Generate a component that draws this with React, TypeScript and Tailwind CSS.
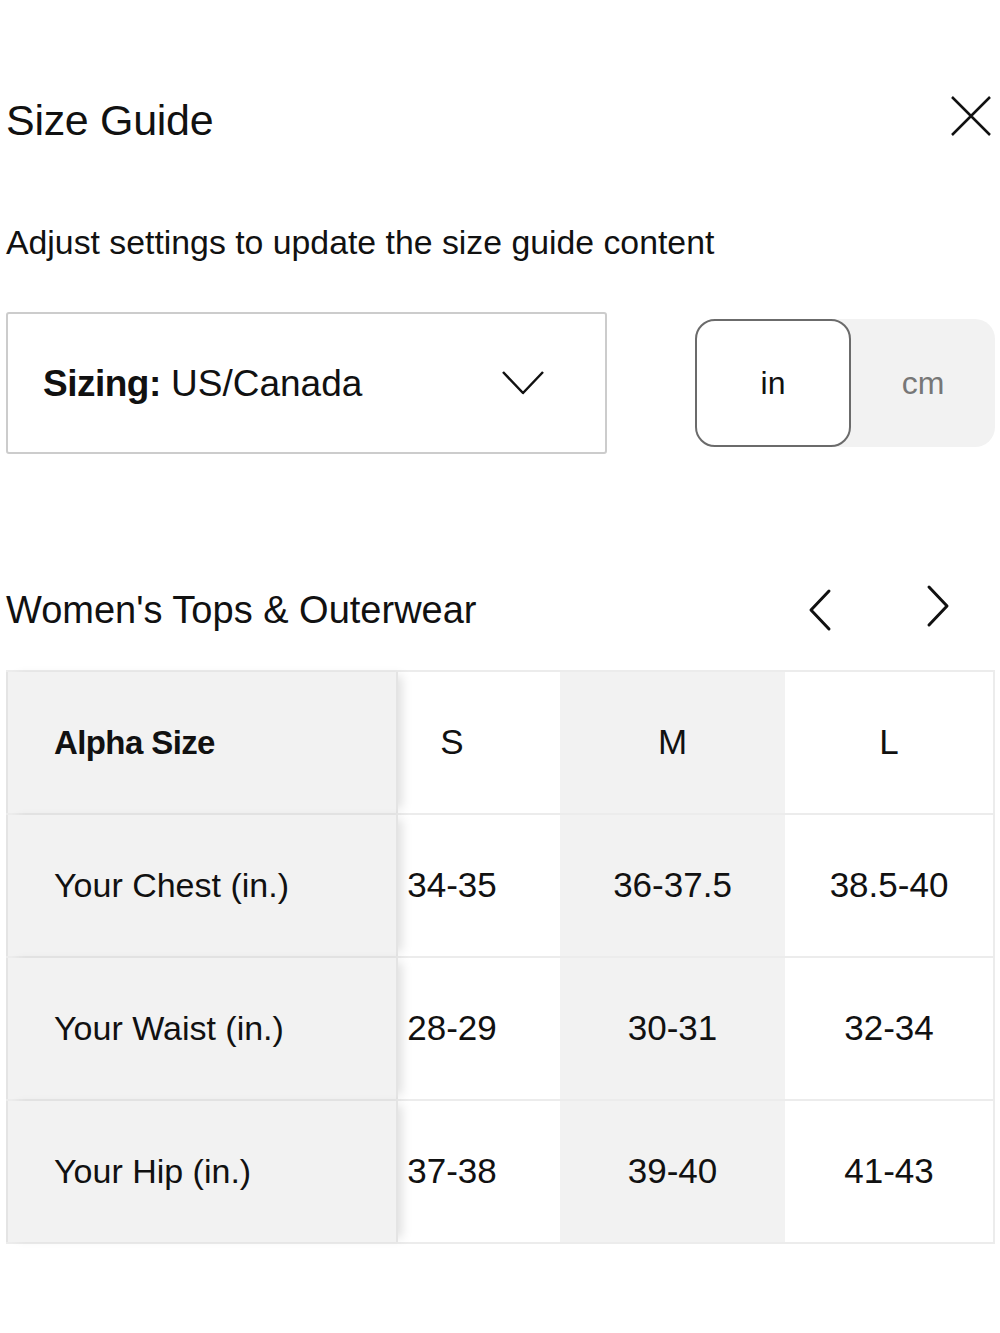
import { useState } from "react";

type Row = { label: string; head?: boolean; values: string[] };

const rows: Row[] = [
  { label: "Alpha Size", head: true, values: ["S", "M", "L"] },
  { label: "Your Chest (in.)", values: ["34-35", "36-37.5", "38.5-40"] },
  { label: "Your Waist (in.)", values: ["28-29", "30-31", "32-34"] },
  { label: "Your Hip (in.)", values: ["37-38", "39-40", "41-43"] },
];

function Chevron({ dir }: { dir: "left" | "right" }) {
  return (
    <svg width="28" height="44" viewBox="0 0 28 44" fill="none">
      <path
        d={dir === "left" ? "M22 3 L4 22 L22 41" : "M6 3 L24 22 L6 41"}
        stroke="#111"
        strokeWidth="3"
        strokeLinecap="round"
        strokeLinejoin="round"
      />
    </svg>
  );
}

export default function App() {
  const [unit, setUnit] = useState<"in" | "cm">("in");

  return (
    <main className="w-[1000px] min-h-[1333px] bg-white pt-[96px] pl-[6px] pr-[5px] font-['Liberation_Sans',Arial,sans-serif] text-[#111]">
      <div className="flex h-[48px] items-center justify-between">
        <h1 className="text-[43px] leading-none tracking-[-0.3px]">Size Guide</h1>
        <button className="mr-[4px] mt-[-8px]" aria-label="Close">
          <svg width="40" height="40" viewBox="0 0 40 40" fill="none">
            <path d="M1 1 L39 39 M39 1 L1 39" stroke="#111" strokeWidth="2.5" />
          </svg>
        </button>
      </div>

      <p className="mt-[78px] text-[33.8px] leading-[40px]">
        Adjust settings to update the size guide content
      </p>

      <div className="mt-[50px] flex items-center justify-between">
        <div className="flex h-[142px] w-[601px] items-center justify-between rounded-[3px] border-2 border-[#cccccc] pl-[35px] pr-[60px]">
          <span className="text-[37px] leading-none">
            <span className="font-bold tracking-[-0.5px]">Sizing:</span> US/Canada
          </span>
          <svg width="44" height="26" viewBox="0 0 44 26" fill="none">
            <path d="M2 2 L22 23 L42 2" stroke="#111" strokeWidth="2.5" strokeLinejoin="round" />
          </svg>
        </div>

        <div className="flex h-[128px] w-[300px] rounded-[20px] bg-[#f2f2f2]">
          <button
            onClick={() => setUnit("in")}
            className={`flex w-[156px] items-center justify-center rounded-[20px] text-[32px] ${
              unit === "in" ? "border-2 border-[#6b6b6b] bg-white text-[#111]" : "text-[#777]"
            }`}
          >
            in
          </button>
          <button
            onClick={() => setUnit("cm")}
            className={`flex flex-1 items-center justify-center rounded-[20px] text-[32px] ${
              unit === "cm" ? "border-2 border-[#6b6b6b] bg-white text-[#111]" : "text-[#777]"
            }`}
          >
            cm
          </button>
        </div>
      </div>

      <div className="mt-[132px] flex h-[48px] items-center justify-between">
        <h2 className="text-[38px] leading-none">Women's Tops &amp; Outerwear</h2>
        <div className="mr-[44px] flex items-center gap-[88px]">
          <Chevron dir="left" />
          <div className="mt-[-8px]">
            <Chevron dir="right" />
          </div>
        </div>
      </div>

      <div className="mt-[36px] w-[989px] border-t-2 border-[#ececec]">
        {rows.map((r) => (
          <div key={r.label} className="flex h-[143px] border-b-2 border-[#ececec]">
            <div className="relative z-10 flex w-[392px] items-center border-l-2 border-r-2 border-[#e4e4e4] bg-[#f2f2f2] pl-[46px] shadow-[8px_0_10px_-4px_rgba(0,0,0,0.13)]">
              <span className={`text-[33px] ${r.head ? "font-bold tracking-[-0.6px]" : "text-[34px]"}`}>{r.label}</span>
            </div>
            <div className="flex w-[162px] items-center justify-center bg-white pr-[54px] text-[35px]">
              {r.values[0]}
            </div>
            <div className="flex w-[225px] items-center justify-center bg-[#f2f2f2] text-[35px]">
              {r.values[1]}
            </div>
            <div className="flex flex-1 items-center justify-center border-r-2 border-[#ececec] bg-white text-[35px]">
              {r.values[2]}
            </div>
          </div>
        ))}
      </div>
    </main>
  );
}
